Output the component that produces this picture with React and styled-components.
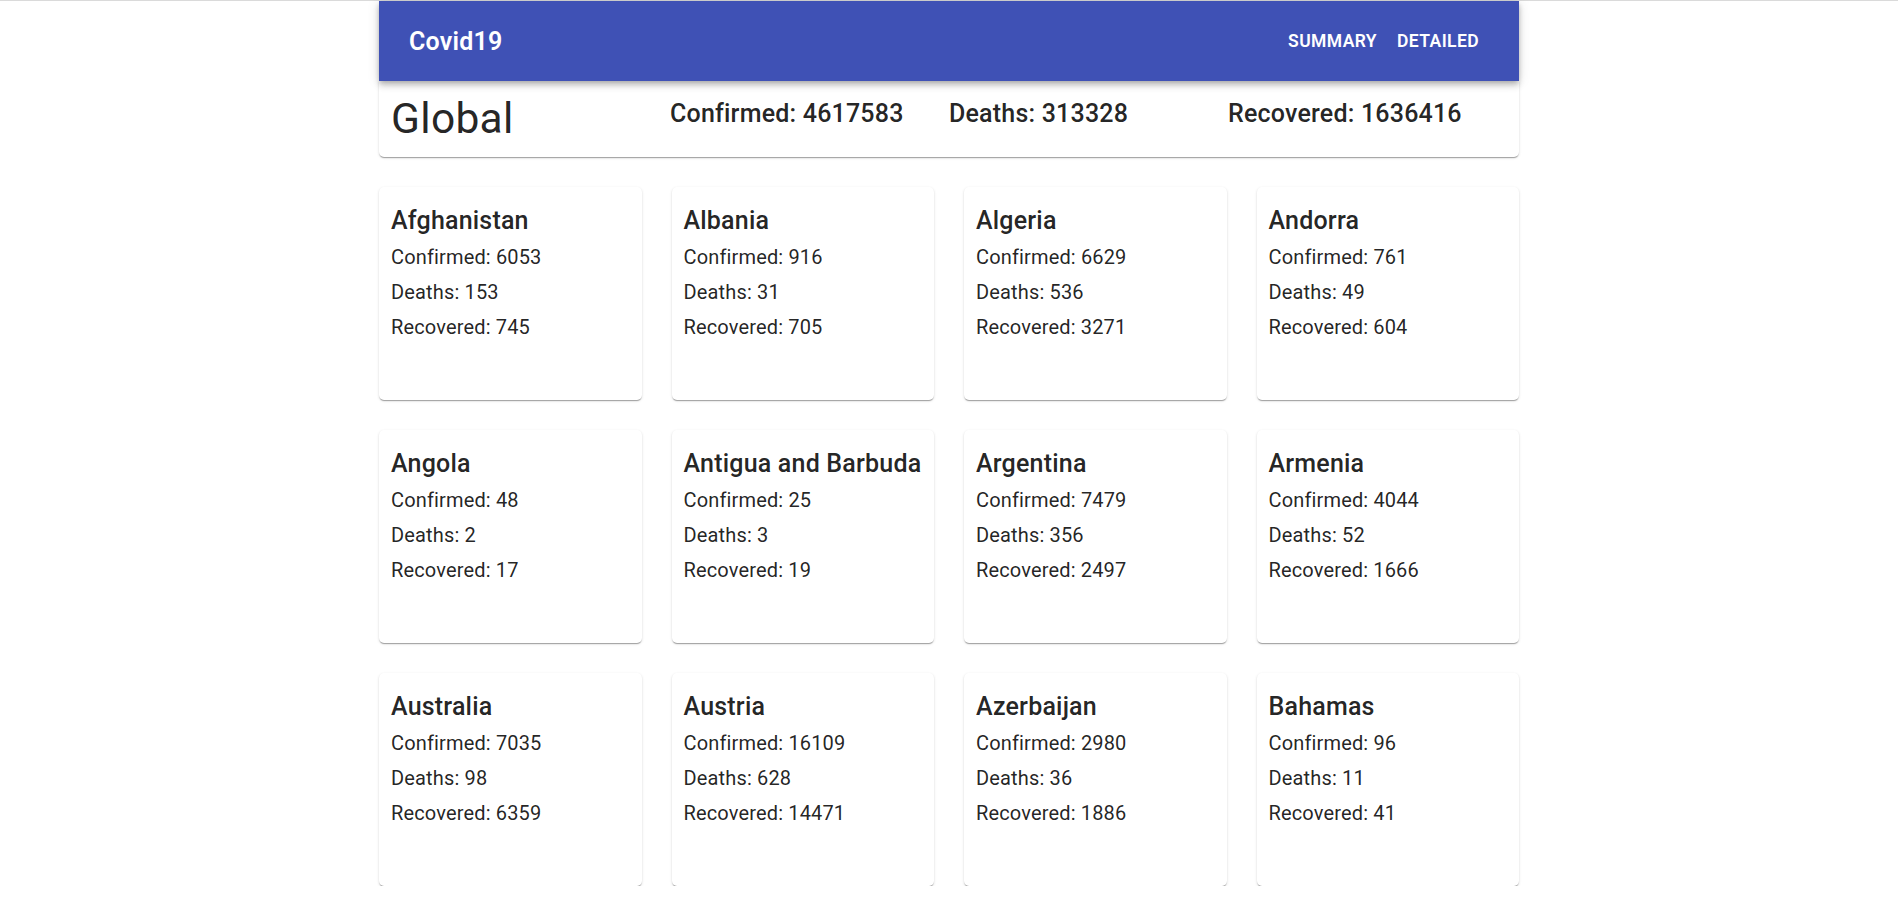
import React from 'react';
import styled, {createGlobalStyle} from 'styled-components';

const GlobalStyle = createGlobalStyle`
  body {
    margin: 0;
    background: #fff;
    font-family: Roboto, "Liberation Sans", sans-serif;
    color: rgba(0, 0, 0, 0.87);
  }
`;

const Page = styled.div`
  border-top: 1px solid #dadada;
`;

const Container = styled.div`
  width: 1140px;
  margin: 0 auto;
`;

const AppBar = styled.header`
  position: relative;
  z-index: 2;
  height: 80px;
  padding: 0 30px;
  display: flex;
  align-items: center;
  justify-content: space-between;
  background: #3f51b5;
  color: #fff;
  box-shadow: 0 2px 5px -1px rgba(0, 0, 0, 0.2),
    0 5px 6px 0 rgba(0, 0, 0, 0.14),
    0 1px 12px 0 rgba(0, 0, 0, 0.12);
`;

const Brand = styled.div`
  font-size: 25px;
  font-weight: 600;
  letter-spacing: 0.2px;
`;

const Nav = styled.nav`
  display: flex;
`;

const NavButton = styled.button`
  padding: 8px 10px;
  border: none;
  background: none;
  color: #fff;
  font-family: inherit;
  font-size: 17.5px;
  font-weight: 600;
  letter-spacing: 0.4px;
  text-transform: uppercase;
  cursor: pointer;
`;

const GlobalCard = styled.section`
  position: relative;
  z-index: 1;
  display: grid;
  grid-template-columns: repeat(4, 1fr);
  align-items: start;
  padding: 12px;
  background: #fff;
  border-radius: 0 0 5px 5px;
  box-shadow: 0 2px 1px -1px rgba(0, 0, 0, 0.2),
    0 1px 1px 0 rgba(0, 0, 0, 0.14),
    0 1px 3px 0 rgba(0, 0, 0, 0.12);
`;

const GlobalTitle = styled.h1`
  margin: 0;
  font-size: 42.5px;
  font-weight: 400;
  line-height: 1.235;
  letter-spacing: 0.3px;
`;

const GlobalStat = styled.div`
  margin-top: 1px;
  font-size: 25px;
  font-weight: 500;
  line-height: 40px;
  letter-spacing: 0.2px;
`;

const CountryGrid = styled.main`
  display: grid;
  grid-template-columns: repeat(4, 1fr);
  gap: 30px;
  margin-top: 30px;
`;

const CountryCard = styled.article`
  box-sizing: border-box;
  height: 213px;
  padding: 14px 12px;
  background: #fff;
  border-radius: 5px;
  box-shadow: 0 2px 1px -1px rgba(0, 0, 0, 0.2),
    0 1px 1px 0 rgba(0, 0, 0, 0.14),
    0 1px 3px 0 rgba(0, 0, 0, 0.12);
`;

const CountryName = styled.h2`
  margin: 0 0 2px;
  font-size: 25px;
  font-weight: 500;
  line-height: 40px;
  letter-spacing: 0.2px;
  white-space: nowrap;
`;

const Line = styled.p`
  margin: 0 0 7px;
  font-size: 20px;
  line-height: 28px;
  letter-spacing: 0.15px;
`;

const global = {confirmed: 4617583, deaths: 313328, recovered: 1636416};

const countries = [
  ['Afghanistan', 6053, 153, 745],
  ['Albania', 916, 31, 705],
  ['Algeria', 6629, 536, 3271],
  ['Andorra', 761, 49, 604],
  ['Angola', 48, 2, 17],
  ['Antigua and Barbuda', 25, 3, 19],
  ['Argentina', 7479, 356, 2497],
  ['Armenia', 4044, 52, 1666],
  ['Australia', 7035, 98, 6359],
  ['Austria', 16109, 628, 14471],
  ['Azerbaijan', 2980, 36, 1886],
  ['Bahamas', 96, 11, 41],
];

const App = () => (
  <Page>
    <GlobalStyle />
    <Container>
      <AppBar>
        <Brand>Covid19</Brand>
        <Nav>
          <NavButton>Summary</NavButton>
          <NavButton>Detailed</NavButton>
        </Nav>
      </AppBar>

      <GlobalCard>
        <GlobalTitle>Global</GlobalTitle>
        <GlobalStat>Confirmed: {global.confirmed}</GlobalStat>
        <GlobalStat>Deaths: {global.deaths}</GlobalStat>
        <GlobalStat>Recovered: {global.recovered}</GlobalStat>
      </GlobalCard>

      <CountryGrid>
        {countries.map(([name, confirmed, deaths, recovered]) => (
          <CountryCard key={name}>
            <CountryName>{name}</CountryName>
            <Line>Confirmed: {confirmed}</Line>
            <Line>Deaths: {deaths}</Line>
            <Line>Recovered: {recovered}</Line>
          </CountryCard>
        ))}
      </CountryGrid>
    </Container>
  </Page>
);

export default App;
